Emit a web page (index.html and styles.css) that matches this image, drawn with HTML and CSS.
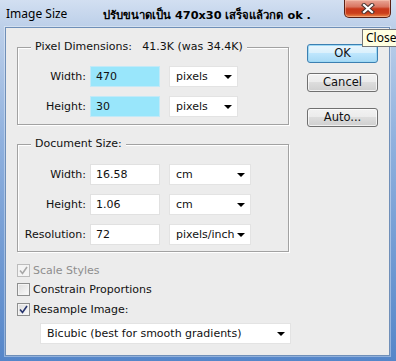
FILE: index.html
```html
<!DOCTYPE html>
<html>
<head>
    <title>Image Size</title>
    <link rel="stylesheet" href="styles.css">
</head>
<body>
    <div class="window">
        <div class="titlebar">
            <span class="title">Image Size</span>
            <span class="note">ปรับขนาดเป็น 470x30 เสร็จแล้วกด ok .</span>
            <div class="close-btn">
                <svg width="14" height="11" viewBox="0 0 14 11">
                    <path d="M3 2 L11 9 M11 2 L3 9" stroke="#4a3430" stroke-width="4.2" stroke-linecap="square"/>
                    <path d="M3 2 L11 9 M11 2 L3 9" stroke="#ffffff" stroke-width="2.2" stroke-linecap="square"/>
                </svg>
            </div>
        </div>

        <div class="client">
            <div class="main">
                <div class="group group-pixel">
                    <span class="group-title">Pixel Dimensions:&nbsp;&nbsp; 41.3K (was 34.4K)</span>
                    <div class="row">
                        <label>Width:</label>
                        <div class="field field-hl">470</div>
                        <div class="dropdown dd-short">pixels<i class="arrow"></i></div>
                    </div>
                    <div class="row">
                        <label>Height:</label>
                        <div class="field field-hl">30</div>
                        <div class="dropdown dd-short">pixels<i class="arrow"></i></div>
                    </div>
                </div>

                <div class="group group-doc">
                    <span class="group-title">Document Size:</span>
                    <div class="row">
                        <label>Width:</label>
                        <div class="field">16.58</div>
                        <div class="dropdown dd-long">cm<i class="arrow"></i></div>
                    </div>
                    <div class="row">
                        <label>Height:</label>
                        <div class="field">1.06</div>
                        <div class="dropdown dd-long">cm<i class="arrow"></i></div>
                    </div>
                    <div class="row">
                        <label>Resolution:</label>
                        <div class="field">72</div>
                        <div class="dropdown dd-long">pixels/inch<i class="arrow"></i></div>
                    </div>
                </div>

                <div class="check-row first disabled">
                    <span class="checkbox">
                        <svg width="9" height="9" viewBox="0 0 9 9"><path d="M1 4.5 L3.5 7.5 L8 1" fill="none" stroke="#a8a8a8" stroke-width="1.6"/></svg>
                    </span>
                    Scale Styles
                </div>
                <div class="check-row">
                    <span class="checkbox"></span>
                    Constrain Proportions
                </div>
                <div class="check-row last">
                    <span class="checkbox">
                        <svg width="9" height="9" viewBox="0 0 9 9"><path d="M1 4.5 L3.5 7.5 L8 1" fill="none" stroke="#27356e" stroke-width="1.6"/></svg>
                    </span>
                    Resample Image:
                </div>

                <div class="dropdown dd-method">Bicubic (best for smooth gradients)<i class="arrow"></i></div>
            </div>

            <div class="buttons">
                <div class="btn btn-default">OK</div>
                <div class="btn btn-cancel">Cancel</div>
                <div class="btn btn-auto">Auto...</div>
            </div>
        </div>
    </div>

    <div class="tooltip">Close</div>
</body>
</html>
```

FILE: styles.css
```css
html, body {
    margin: 0;
    padding: 0;
}
body {
    width: 396px;
    height: 361px;
    overflow: hidden;
    position: relative;
    font-family: "DejaVu Sans", sans-serif;
    font-size: 11px;
    color: #111;
}
.window {
    width: 396px;
    height: 361px;
    display: flex;
    flex-direction: column;
    background: linear-gradient(180deg, #d2dff1 0px, #bccfe9 27px, #90b1de 140px, #5586c9 361px);
}
.titlebar {
    height: 27px;
    display: flex;
    align-items: flex-start;
    flex-shrink: 0;
}
.title {
    font-family: "Noto Sans", sans-serif;
    font-size: 12px;
    width: 97px;
    padding-left: 6px;
    margin-top: 5px;
    color: #000;
}
.note {
    font-family: "DejaVu Sans", sans-serif;
    font-size: 11.3px;
    font-weight: bold;
    margin-top: 6px;
    white-space: nowrap;
    color: #000;
}
.close-btn {
    margin-left: auto;
    margin-right: 5px;
    width: 47px;
    height: 18px;
    box-sizing: border-box;
    border: 1px solid #5a2014;
    border-top: none;
    border-radius: 0 0 5px 5px;
    background: linear-gradient(180deg, #eaa797 0%, #d97560 40%, #c8381a 52%, #cb3f1c 78%, #ee8a48 100%);
    box-shadow: inset 0 0 0 1px rgba(255, 210, 190, 0.45);
    display: flex;
    align-items: center;
    justify-content: center;
    flex-shrink: 0;
}
.client {
    flex: 1;
    margin: 0 6px 5px 5px;
    background: #ececec;
    border: 1px solid #6f8fb8;
    box-shadow: 0 0 0 1px rgba(255, 255, 255, 0.35);
    display: flex;
    align-items: flex-start;
    padding: 16px 0 0 11px;
}
.main {
    width: 273px;
    margin-top: 3px;
}
.group {
    position: relative;
    width: 272px;
    box-sizing: border-box;
    border: 1px solid #a2a2a2;
    box-shadow: inset 1px 1px 0 #fff, 1px 1px 0 #fff;
}
.group-pixel {
    padding: 18px 0 7px 0;
}
.group-doc {
    margin-top: 19px;
    padding: 19px 0 6px 0;
}
.group-title {
    position: absolute;
    top: -8px;
    left: 13px;
    padding: 0 4px;
    background: #ececec;
    line-height: 14px;
    white-space: nowrap;
}
.row {
    display: flex;
    align-items: center;
    height: 21px;
}
.row + .row {
    margin-top: 9px;
}
.row label {
    width: 68px;
    margin-right: 4px;
    text-align: right;
}
.field {
    width: 70px;
    height: 21px;
    box-sizing: border-box;
    padding-left: 5px;
    line-height: 19px;
    background: #fff;
    border: 1px solid #e1e1e1;
}
.field-hl {
    background: #99e6fb;
    border-color: #c2e9f7;
}
.dropdown {
    height: 21px;
    box-sizing: border-box;
    margin-left: 9px;
    padding-left: 6px;
    background: #fff;
    border: 1px solid #e3e3e3;
    display: flex;
    align-items: center;
    white-space: nowrap;
}
.dd-short {
    width: 69px;
}
.dd-long {
    width: 82px;
}
.dd-method {
    width: 251px;
    margin: 7px 0 0 23px;
}
.arrow {
    margin-left: auto;
    margin-right: 5px;
    width: 0;
    height: 0;
    border-left: 4px solid transparent;
    border-right: 4px solid transparent;
    border-top: 4px solid #000;
}
.check-row {
    display: flex;
    align-items: center;
    height: 13px;
    margin-top: 6px;
}
.check-row.first {
    margin-top: 12px;
}
.check-row.last {
    margin-top: 7px;
}
.check-row.disabled {
    color: #8e8e8e;
}
.checkbox {
    width: 13px;
    height: 13px;
    box-sizing: border-box;
    margin-right: 3px;
    border: 1px solid #8e8f8f;
    background: linear-gradient(135deg, #dcdcdc, #fbfbfb);
    box-shadow: inset 0 0 0 1px #f4f4f4;
    display: flex;
    align-items: center;
    justify-content: center;
}
.disabled .checkbox {
    border-color: #bcbcbc;
    background: #f4f4f4;
}
.buttons {
    margin-left: 17px;
    width: 71px;
}
.btn {
    height: 19px;
    box-sizing: border-box;
    border: 1px solid #707070;
    border-radius: 3px;
    background: linear-gradient(180deg, #f2f2f2 0%, #ebebeb 50%, #dddddd 50%, #cfcfcf 100%);
    box-shadow: inset 0 0 0 1px rgba(255, 255, 255, 0.7);
    text-align: center;
    line-height: 17px;
    font-size: 11.5px;
}
.btn-default {
    border-color: #3c7fb1;
    box-shadow: inset 0 0 0 1px #9ed9f5;
    background: linear-gradient(180deg, #eaf6fd 0%, #d9f0fc 50%, #bee6fd 50%, #a7d9f5 100%);
}
.btn-cancel {
    margin-top: 10px;
}
.btn-auto {
    margin-top: 16px;
}
.tooltip {
    position: absolute;
    left: 362px;
    top: 29px;
    width: 40px;
    height: 18px;
    box-sizing: border-box;
    border: 1px solid #767676;
    background: #ffffe1;
    font-family: "Noto Sans", sans-serif;
    font-size: 12px;
    line-height: 15px;
    padding-left: 3px;
    color: #000;
}
```
